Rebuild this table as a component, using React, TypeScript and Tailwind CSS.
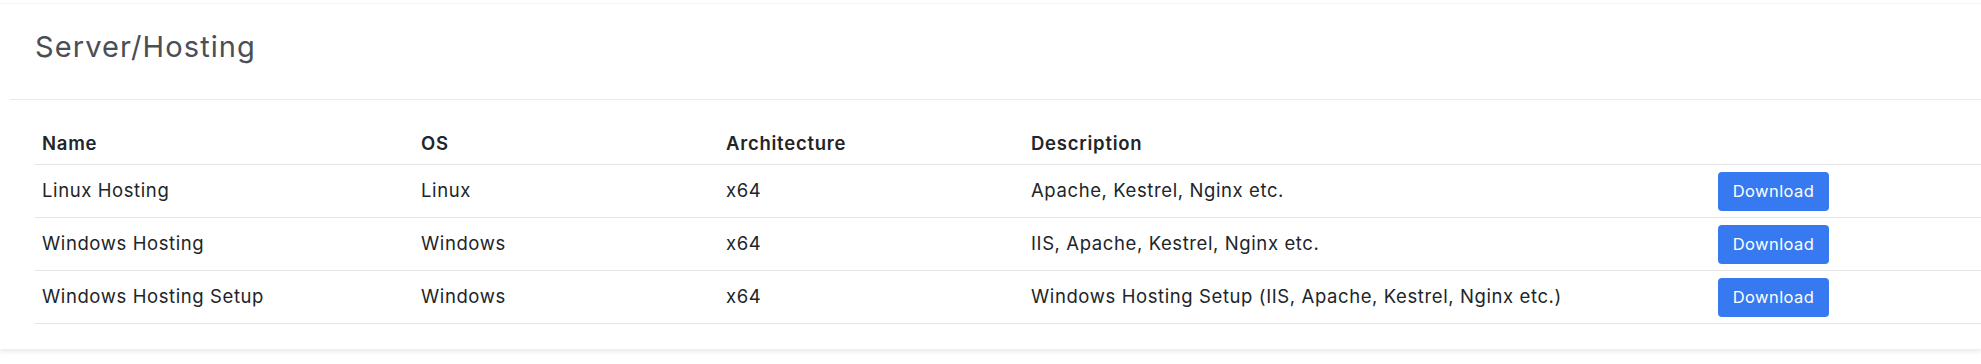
const rows = [
  { name: "Linux Hosting", os: "Linux", arch: "x64", desc: "Apache, Kestrel, Nginx etc." },
  { name: "Windows Hosting", os: "Windows", arch: "x64", desc: "IIS, Apache, Kestrel, Nginx etc." },
  {
    name: "Windows Hosting Setup",
    os: "Windows",
    arch: "x64",
    desc: "Windows Hosting Setup (IIS, Apache, Kestrel, Nginx etc.)",
  },
];

const cols = "grid grid-cols-[379px_305px_305px_687px_1fr]";

export default function App() {
  return (
    <div className="w-[1981px] h-[364px] bg-white pt-[3px] font-['Inter',sans-serif] text-[#212529]">
      <div className="bg-white border-t border-[#f3f3f3] shadow-[0_3px_4px_rgba(0,0,0,0.08)] pb-[25px]">
        <div className="ml-[10px] h-[96px] border-b border-[#e9e9e9] flex items-center pl-[25px] pb-[9px]">
          <h2 className="text-[29px] text-[#4a4e55] tracking-[1.1px]">Server/Hosting</h2>
        </div>
        <div className="pl-[35px] pt-[23px]">
          <div
            className={`${cols} h-[42px] items-center border-b border-[#e6e6e6] font-semibold text-[18.5px] tracking-[0.75px]`}
          >
            <div className="pl-[7px]">Name</div>
            <div className="pl-[7px]">OS</div>
            <div className="pl-[7px]">Architecture</div>
            <div className="pl-[7px]">Description</div>
            <div />
          </div>
          {rows.map((r) => (
            <div
              key={r.name}
              className={`${cols} h-[53px] items-center border-b border-[#e6e6e6] text-[18.5px] tracking-[0.6px]`}
            >
              <div className="pl-[7px]">{r.name}</div>
              <div className="pl-[7px]">{r.os}</div>
              <div className="pl-[7px]">{r.arch}</div>
              <div className="pl-[7px]">{r.desc}</div>
              <div className="pl-[7px]">
                <button className="w-[111px] h-[39px] rounded-[4px] bg-[#3679f0] text-white text-[16.5px] tracking-[0.4px]">
                  Download
                </button>
              </div>
            </div>
          ))}
        </div>
      </div>
    </div>
  );
}
